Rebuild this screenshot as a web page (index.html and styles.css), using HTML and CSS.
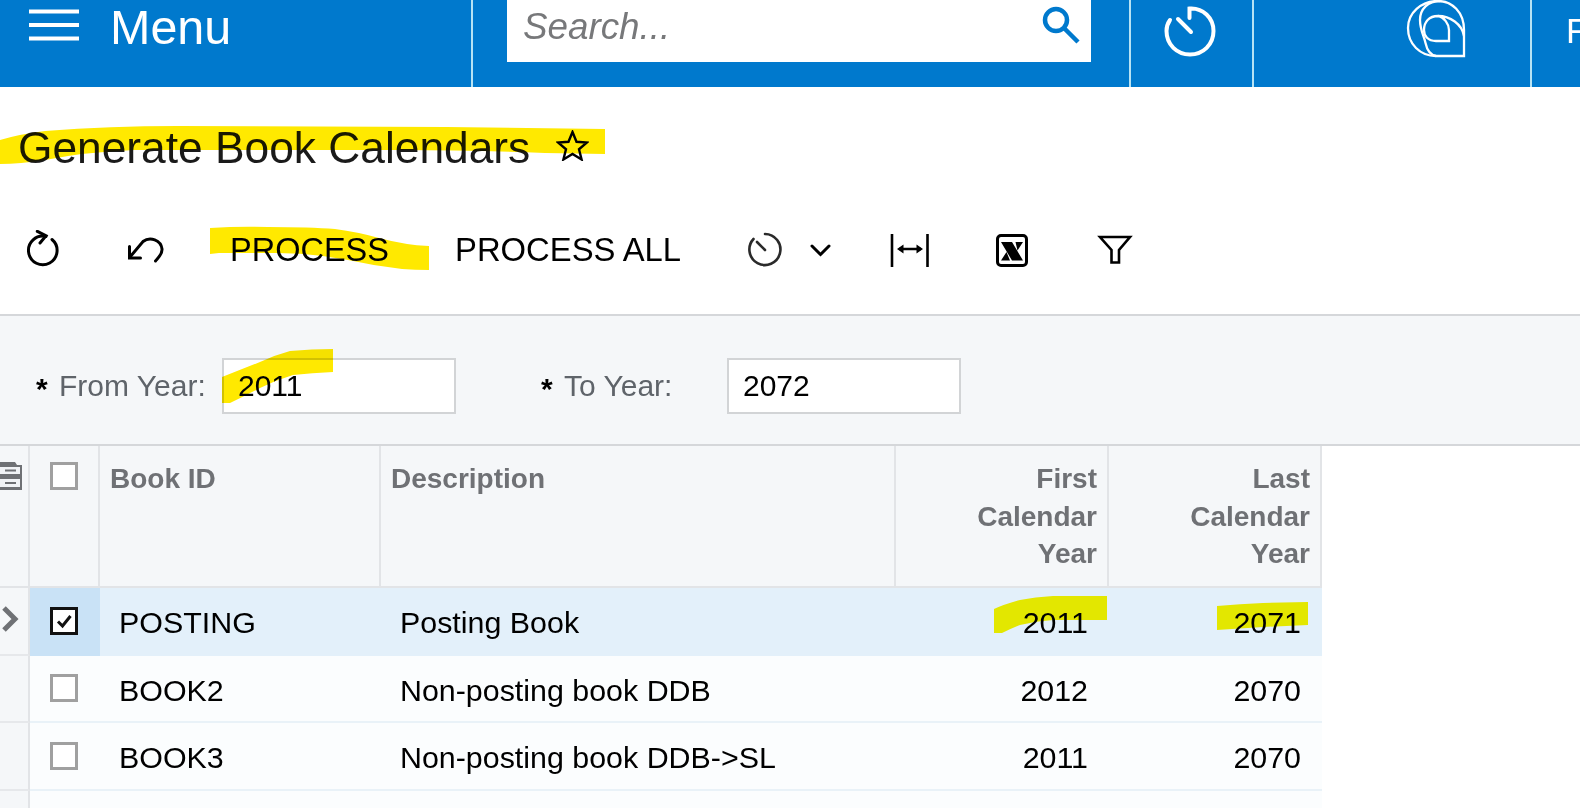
FILE: index.html
```html
<!DOCTYPE html>
<html lang="en">
<head>
<meta charset="utf-8">
<title>Generate Book Calendars</title>
<link rel="stylesheet" href="styles.css">
</head>
<body>
<div class="page">
  <header class="topbar">
    <div class="zone zone-menu">
      <svg class="burger" width="50" height="32" viewBox="0 0 50 32"><path d="M0 2.500H50M0 16H50M0 29.500H50"/></svg>
      <span class="menu-label">Menu</span>
    </div>
    <div class="zone zone-search">
      <div class="search">
        <input class="search-input" type="text" placeholder="Search...">
        <svg class="search-icon" width="40" height="46" viewBox="1040 0 40 46"><circle cx="1055" cy="20" r="11"/><path d="M1063.500 28.500L1077 42"/></svg>
      </div>
    </div>
    <div class="zone zone-timer">
      <svg class="line-white" width="56" height="56" viewBox="1162 3 56 56"><path d="M1189.500 18V8.500C1203 7.500 1213.500 18 1213.500 31C1213.500 44.500 1203 54.500 1190 54.500C1177 54.500 1166.500 44.500 1166.500 31C1166.500 27 1167.500 23.500 1170 20"/><path d="M1178 19L1191 32"/></svg>
    </div>
    <div class="zone zone-logo">
      <svg class="logo" width="60" height="60" viewBox="10 -1 60 60"><path d="M68 56V30C68 12 56 1 42 1C25 1 12 13 12 28C12 44 24 56 40 56H68Z"/><path d="M44 1C32 1 24 9 24 20C24 30 28 36 29.500 43C31 50 35 55 40 56"/><path d="M68 36C66 24 54 16 42 16C33 16 28 22 28 30C28 36 32 41 40 41H53V30C53 24 48 17 42 16"/></svg>
    </div>
    <div class="zone zone-last"><span class="last-label">F</span></div>
  </header>

  <div class="title-row">
    <h1 class="title">Generate Book Calendars</h1>
    <svg class="star" width="33" height="31" viewBox="0 0 33 31"><path d="M16.500 2L20.500 11.800L31 12.500L23 19.300L25.600 29.500L16.500 24L7.400 29.500L10 19.300L2 12.500L12.500 11.800Z"/></svg>
  </div>

  <nav class="toolbar">
    <div class="tb tb-refresh"><svg class="ico" width="40" height="40" viewBox="23 232 40 40"><path d="M46 238.500A14.300 14.300 0 1 0 52 241.500"/><path d="M37.300 233.300L46 237.700L40 245"/></svg></div>
    <div class="tb tb-undo"><svg class="ico" width="40" height="40" viewBox="125 230 40 40"><path d="M130 257L143 241.500C150 236 161 240 162 249C162.500 254 158 258 155.500 261"/><path d="M129.500 246.500V258H140.500"/></svg></div>
    <div class="tb tb-process">PROCESS</div>
    <div class="tb tb-process-all">PROCESS ALL</div>
    <div class="tb tb-timer"><svg class="ico ico-thin" width="40" height="40" viewBox="745 230 40 40"><path d="M765 234A15.500 15.500 0 1 1 753.500 239"/><path d="M757 242L765 250"/></svg></div>
    <div class="tb tb-chevron"><svg class="ico" width="24" height="16" viewBox="809 244 24 16"><path d="M812 248L820.500 256.500L829 248"/></svg></div>
    <div class="tb tb-fit"><svg width="44" height="40" viewBox="887 230 44 40"><path class="fit-line" d="M892 234V267M927.500 234V267M899 249H921"/><path d="M897 249L903.500 244.500V253.500ZM923 249L916.500 244.500V253.500Z"/></svg></div>
    <div class="tb tb-excel"><svg width="36" height="40" viewBox="994 230 36 40"><rect class="xl-box" x="997.500" y="235.500" width="29" height="30" rx="3.500"/><path d="M1001 242H1012L1023 260.500H1012ZM1015.500 242H1023L1017.500 250.500ZM1001 260.500L1006.500 252L1010 260.500Z"/></svg></div>
    <div class="tb tb-filter"><svg class="ico ico-miter" width="40" height="34" viewBox="1095 234 40 34"><path d="M1100 238H1130L1119 251V263.500H1111.500V251Z"/></svg></div>
  </nav>

  <section class="form">
    <div class="field">
      <span class="req">*</span>
      <label class="field-label" for="from-year">From Year:</label>
      <input class="field-input" id="from-year" type="text" value="2011">
    </div>
    <div class="field">
      <span class="req">*</span>
      <label class="field-label" for="to-year">To Year:</label>
      <input class="field-input" id="to-year" type="text" value="2072">
    </div>
  </section>

  <section class="grid">
    <div class="row head">
      <div class="cell gutter"><svg class="cabinet" width="22" height="28" viewBox="0 0 22 28"><path class="cab-body" d="M0 0H15L17 3H22V28H0Z"/><path class="cab-slot" d="M0 5H20V12H0ZM0 17H20V25H0Z"/><path class="cab-body" d="M5 7.500H16V9.500H5ZM5 20H16V22H5Z"/></svg></div>
      <div class="cell check"><span class="box"></span></div>
      <div class="cell">Book ID</div>
      <div class="cell">Description</div>
      <div class="cell num">First<br>Calendar<br>Year</div>
      <div class="cell num">Last<br>Calendar<br>Year</div>
    </div>
    <div class="row selected">
      <div class="cell gutter"><svg class="pointer" width="20" height="26" viewBox="0 0 20 26"><path d="M4 2L15 13L4 24"/></svg></div>
      <div class="cell check"><span class="box on"><svg width="22" height="22" viewBox="0 0 22 22"><path d="M5 11.500L9.500 16L17.500 6"/></svg></span></div>
      <div class="cell">POSTING</div>
      <div class="cell">Posting Book</div>
      <div class="cell num">2011</div>
      <div class="cell num">2071</div>
    </div>
    <div class="row">
      <div class="cell gutter"></div>
      <div class="cell check"><span class="box"></span></div>
      <div class="cell">BOOK2</div>
      <div class="cell">Non-posting book DDB</div>
      <div class="cell num">2012</div>
      <div class="cell num">2070</div>
    </div>
    <div class="row">
      <div class="cell gutter"></div>
      <div class="cell check"><span class="box"></span></div>
      <div class="cell">BOOK3</div>
      <div class="cell">Non-posting book DDB-&gt;SL</div>
      <div class="cell num">2011</div>
      <div class="cell num">2070</div>
    </div>
    <div class="row">
      <div class="cell gutter"></div>
      <div class="cell check"></div>
      <div class="cell"></div>
      <div class="cell"></div>
      <div class="cell num"></div>
      <div class="cell num"></div>
    </div>
  </section>

  <svg class="marker" width="1580" height="808" viewBox="0 0 1580 808">
    <path d="M0 164V140Q20 134 45 131Q110 126 178 126L446 127L605 129V154L545 153Q470 150 400 150H134Q85 152 45 160Q20 164 0 164Z"/>
    <path d="M210 228Q240 226 268 227Q310 227 335 229Q358 232 379 238Q405 245 429 246V270Q415 270 402 269Q375 266 348 260Q312 253 277 253H219L210 254Z"/>
    <path d="M222 377Q240 370 260 362Q275 355 290 351Q312 349 333 349V372Q312 373 293 375Q276 380 260 388Q245 396 230 403H222Z"/>
    <path class="marker-cool" d="M994 609Q1005 604 1020 600Q1035 597 1053 596H1107V620H1053Q1036 621 1020 625Q1010 629 1002 633H994Z"/>
    <path class="marker-cool" d="M1217 606Q1240 604 1263 603L1308 602V625L1263 627L1217 630Z"/>
  </svg>
</div>
</body>
</html>
```
FILE: styles.css
```css
* { box-sizing: border-box; }
html, body { margin: 0; padding: 0; background: #fff; }
body { font-family: "Liberation Sans", Arial, sans-serif; color: #000; }
.page { position: relative; width: 1580px; height: 808px; overflow: hidden; }

.topbar { display: flex; height: 87px; background: #0079cd; color: #fff; }
.zone { display: flex; align-items: flex-start; border-right: 2px solid #b7e3f4; flex: none; }
.zone-menu { width: 473px; padding: 9px 0 0 29px; }
.burger { display: block; margin-right: 31px; }
.burger path { stroke: #fff; stroke-width: 4; fill: none; }
.menu-label { font-size: 48.500px; line-height: 48px; margin-top: -6px; }
.zone-search { width: 658px; padding-left: 34px; }
.search { display: flex; align-items: flex-start; width: 584px; height: 62px; background: #fff; }
.search-input { flex: 1; min-width: 0; height: 54px; border: 0; outline: 0; padding: 0 0 0 16px; background: transparent; font: italic 36.800px "Liberation Sans", Arial, sans-serif; }
.search-input::placeholder { color: #77787a; opacity: 1; }
.search-icon { flex: none; margin-right: 10px; }
.search-icon circle, .search-icon path { fill: none; stroke: #0079cd; stroke-width: 4.500; }
.zone-timer { width: 123px; padding: 3px 0 0 31px; }
.line-white path { fill: none; stroke: #fff; stroke-width: 4; stroke-linecap: round; }
.zone-logo { width: 278px; padding: 0 0 0 152px; }
.logo { display: block; margin-top: -1px; }
.logo path { fill: none; stroke: #fff; stroke-width: 2.300; }
.zone-last { border-right: 0; flex: 1; padding: 11px 0 0 34px; }
.last-label { font-size: 35px; line-height: 40px; }

.title-row { display: flex; align-items: center; height: 109px; padding: 12px 0 0 18px; }
.title { margin: 0; font-size: 44.300px; line-height: 50px; font-weight: 400; color: #1a1a1a; }
.star { flex: none; margin: 0 0 4px 26px; }
.star path { fill: none; stroke: #000; stroke-width: 2.400; stroke-linejoin: miter; }

.toolbar { display: flex; align-items: center; height: 118px; padding: 0 0 10px 23px; font-size: 32.500px; }
.tb { display: flex; align-items: center; flex: none; }
.ico path { fill: none; stroke: #000; stroke-width: 3; stroke-linecap: round; stroke-linejoin: miter; }
.ico-thin path { stroke: #2a2a2a; stroke-width: 2.600; }
.ico-miter path { stroke-width: 2.600; stroke-linecap: butt; }
.tb-refresh { width: 102px; }
.tb-undo { width: 105px; }
.tb-process { width: 225px; }
.tb-process-all { width: 290px; font-size: 32.800px; }
.tb-timer { width: 64px; }
.tb-chevron { width: 78px; }
.tb-fit { width: 107px; }
.tb-excel { width: 101px; }
.fit-line { fill: none; stroke: #000; stroke-width: 2.600; }
.xl-box { fill: none; stroke: #000; stroke-width: 3; }

.form { display: flex; align-items: flex-start; height: 132px; padding: 42px 0 0 36px; background: #f5f7f9; border-top: 2px solid #d5d7da; border-bottom: 2px solid #d5d7da; font-size: 30px; }
.field { display: flex; align-items: center; flex: none; width: 505px; height: 56px; }
.req { flex: none; width: 23px; font-size: 30px; font-weight: 700; line-height: 30px; padding-top: 6px; }
.field-label { flex: none; width: 163px; color: #5f646a; }
.field-input { flex: none; width: 234px; height: 56px; border: 2px solid #d2d4d6; background: #fff; padding: 0 0 0 14px; font: 30px "Liberation Sans", Arial, sans-serif; color: #000; outline: 0; }

.grid { width: 1322px; font-size: 30.400px; line-height: 38px; }
.row { display: grid; grid-template-columns: 30px 70px 281px 515px 213px 213px; height: 67.500px; background: #fbfdfe; }
.row .cell { padding: 15px 0 0 19px; border-bottom: 2px solid #e9f2f8; white-space: nowrap; }
.row .num { padding: 15px 21px 0 0; text-align: right; }
.row .gutter { padding: 0; background: #f5f7f9; border-right: 2px solid #e2e4e7; border-bottom-color: #e6e8eb; }
.row .check { display: flex; justify-content: flex-start; padding: 18.500px 0 0 20px; }
.row.selected { background: #e3f0fa; }
.row.selected .cell { border-bottom-color: #e3f0fa; }
.row.selected .gutter { border-bottom-color: #e6e8eb; }
.row.selected .check { background: #c9e2f6; border-bottom-color: #c9e2f6; }

.row.head { height: 142px; background: #f5f7f9; color: #6f7175; font-size: 28px; line-height: 37.500px; font-weight: 700; }
.row.head .cell { padding: 14px 0 0 10px; border-right: 2px solid #e2e4e7; border-bottom: 2px solid #e2e4e7; }
.row.head .num { padding: 14px 10px 0 0; text-align: right; }
.row.head .gutter { padding: 16px 0 0; }
.row.head .check { padding: 16px 0 0 20px; }
.box { display: flex; align-items: center; justify-content: center; flex: none; width: 28px; height: 28px; border: 3px solid #a0a0a0; background: #fff; }
.box.on { border-color: #111; }
.box svg path { fill: none; stroke: #111; stroke-width: 3; }
.cabinet { display: block; }
.cab-body { fill: #6f7175; }
.cab-slot { fill: #f1f3f6; }
.pointer { display: block; margin-top: 18px; }
.pointer path { fill: none; stroke: #6f7175; stroke-width: 5; }

.marker { position: absolute; left: 0; top: 0; pointer-events: none; mix-blend-mode: multiply; }
.marker path { fill: #ffe900; }
.marker .marker-cool { fill: #fff600; }
```
